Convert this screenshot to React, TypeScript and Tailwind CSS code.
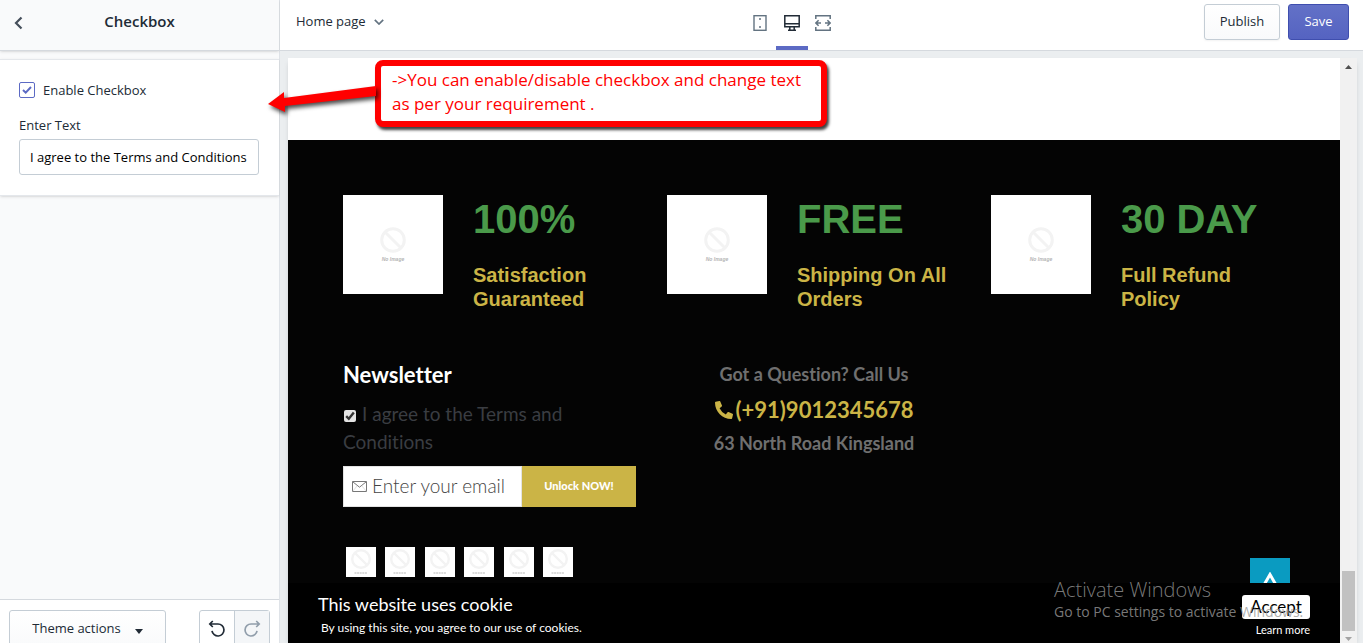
import { useState } from 'react';
import { FaPhoneAlt } from 'react-icons/fa';

const features = [
	{ title: '100%', text: 'Satisfaction Guaranteed' },
	{ title: 'FREE', text: 'Shipping On All Orders' },
	{ title: '30 DAY', text: 'Full Refund Policy' }
];

const socials = ['Facebook', 'Twitter', 'Pinterest', 'Instagram', 'YouTube', 'Vimeo'];

function NoImage() {
	return (
		<div className="w-[100px] h-[99px] shrink-0 bg-white flex flex-col items-center pt-8">
			<svg width="26" height="26" viewBox="0 0 26 26" fill="none" stroke="#f3f3f3" strokeWidth="3">
				<circle cx="13" cy="13" r="11.3" />
				<path d="M5 5l16 16" />
			</svg>
			<span className="mt-[3px] text-[5px] leading-[6px] italic font-bold text-[#b5b5b5]">No Image</span>
		</div>
	);
}

function SocialLink({ label }: { label: string }) {
	return (
		<a href="#" aria-label={label} className="w-[30px] h-[30px] bg-white flex justify-center">
			<svg width="30" height="30" viewBox="0 0 30 30" fill="none" stroke="#f3f3f3" strokeWidth="2.4">
				<circle cx="15" cy="12" r="8.8" />
				<path d="M9 6l12 12" />
				<path d="M8.5 26h13" stroke="#cfcfcf" strokeWidth="1.6" strokeDasharray="2 .6" />
			</svg>
		</a>
	);
}

function Sidebar() {
	const [enabled, setEnabled] = useState(true);
	const [text, setText] = useState('I agree to the Terms and Conditions');

	return (
		<aside className="w-[280px] shrink-0 flex flex-col border-r border-[#dfe3e8] bg-[#f9fafb]">
			<header className="h-[51px] shrink-0 flex items-center border-b border-[#d5d9de] shadow-sm pb-1">
				<button aria-label="Back" className="w-9 flex justify-center">
					<svg width="9" height="14" viewBox="0 0 9 14" fill="none" stroke="#454f5b" strokeWidth="2.2">
						<path d="M7.5 1.5L2 7l5.5 5.5" />
					</svg>
				</button>
				<h1 className="flex-1 pr-9 pb-1 text-center text-[15px] leading-5 font-semibold">Checkbox</h1>
			</header>

			<section className="mt-2 bg-white border-y border-[#e4e7eb] shadow-sm pl-[19px] pr-5 py-5">
				<label className="flex items-center gap-2 text-[13px] leading-5">
					<input
						type="checkbox"
						checked={enabled}
						onChange={(e) => setEnabled(e.target.checked)}
						className="peer sr-only"
					/>
					<span className="w-4 h-4 rounded-xs border border-[#5c6ac4] bg-white flex items-center justify-center">
						{enabled && (
							<svg width="10" height="8" viewBox="0 0 10 8" fill="none" stroke="#5c6ac4" strokeWidth="2">
								<path d="M1 4l2.7 2.6L9 1" />
							</svg>
						)}
					</span>
					Enable Checkbox
				</label>
				<label htmlFor="agree-text" className="block mt-[15px] text-[13px] leading-5">
					Enter Text
				</label>
				<input
					id="agree-text"
					value={text}
					onChange={(e) => setText(e.target.value)}
					className="mt-1 w-full h-9 px-[10px] text-[13px] text-black bg-white border border-[#c4cdd5] rounded-[3px]"
				/>
			</section>

			<footer className="mt-auto h-11 shrink-0 bg-white border-t border-[#d5d9de] px-[9px] pt-[10px] flex justify-between items-start overflow-hidden">
				<button className="w-[157px] h-[38px] shrink-0 flex items-center justify-center gap-[14px] border border-[#c4cdd5] rounded-[3px] bg-linear-to-b from-white to-[#f9fafb] text-[13px]">
					Theme actions
					<svg width="8" height="5" viewBox="0 0 8 5" className="mt-1">
						<path d="M0 0h8L4 5z" fill="#212b36" />
					</svg>
				</button>
				<div className="flex h-[38px] border border-[#c4cdd5] rounded-[3px]">
					<button aria-label="Undo" className="w-[34px] flex items-center justify-center">
						<svg width="18" height="18" viewBox="0 0 18 18" fill="none" stroke="#212b36" strokeWidth="1.7">
							<path d="M2 4h8a6 6 0 1 1-6 6.8M4.8 1L1.8 4l3 3" />
						</svg>
					</button>
					<button
						aria-label="Redo"
						disabled
						className="w-[35px] flex items-center justify-center border-l border-[#c4cdd5] bg-[#f4f6f8]"
					>
						<svg width="18" height="18" viewBox="0 0 18 18" fill="none" stroke="#919eab" strokeWidth="1.7">
							<path d="M16 4H8a6 6 0 1 0 6 6.8M13.2 1l3 3-3 3" />
						</svg>
					</button>
				</div>
			</footer>
		</aside>
	);
}

function TopBar() {
	return (
		<header className="h-[51px] shrink-0 flex justify-between bg-white border-b border-[#d5d9de] pl-4 pr-[14px]">
			<button className="h-11 flex items-center gap-2 text-[13px]">
				Home page
				<svg width="10" height="6" viewBox="0 0 10 6" fill="none" stroke="#637381" strokeWidth="1.7">
					<path d="M.8 .8L5 5 9.2 .8" />
				</svg>
			</button>

			<nav className="flex h-[50px] mr-1">
				<button aria-label="Mobile" className="w-[31px] flex justify-center pt-[15px]">
					<svg width="14" height="16" viewBox="0 0 14 16" fill="none" stroke="#637381" strokeWidth="1.4">
						<rect x="1" y=".7" width="12" height="14.6" />
						<path d="M6 4h2M6 12h2" />
					</svg>
				</button>
				<button aria-label="Desktop" className="w-8 flex justify-center pt-[15px] border-b-4 border-[#5c6ac4]">
					<svg width="16" height="16" viewBox="0 0 16 16" fill="none" stroke="#212b36" strokeWidth="1.5">
						<path d="M.8 .8h14.4v11H.8zM.8 8.8h14.4M5.8 12v3.2h4.4V12M4 15.2h8" />
					</svg>
				</button>
				<button aria-label="Full width" className="w-[31px] flex justify-center pt-[15px]">
					<svg width="16" height="16" viewBox="0 0 16 16" fill="none" stroke="#637381" strokeWidth="1.5">
						<path d="M.8 4V.8h14.4V4M.8 12v3.2h14.4V12M1 8h5M10 8h5M3.6 5.2L.9 8l2.7 2.8M12.4 5.2L15.1 8l-2.7 2.8" />
					</svg>
				</button>
			</nav>

			<div className="flex gap-2 pt-1 text-[13px]">
				<button className="w-[76px] h-9 border border-[#c4cdd5] rounded-[3px] bg-linear-to-b from-white to-[#f9fafb] shadow-xs">
					Publish
				</button>
				<button className="w-[61px] h-9 border border-[#3f4eae] rounded-[3px] bg-linear-to-b from-[#6371c7] to-[#5563c1] text-white">
					Save
				</button>
			</div>
		</header>
	);
}

function Newsletter() {
	const [agreed, setAgreed] = useState(true);

	return (
		<div className="pl-[15px] pr-4">
			<h3 className="text-[22px] leading-7 font-bold text-white">Newsletter</h3>
			<label className="block mt-[11px] pr-8 text-[19px] leading-7 text-[#3a3d42]">
				<input
					type="checkbox"
					checked={agreed}
					onChange={(e) => setAgreed(e.target.checked)}
					className="peer sr-only"
				/>
				<span className="inline-flex items-center justify-center align-baseline w-3 h-3 ml-px mr-[6px] rounded-xs bg-[#e4e4e4]">
					<svg width="10" height="10" viewBox="0 0 10 10" fill="none" stroke="#333" strokeWidth="2.4">
						{agreed && <path d="M1.2 5.2l2.6 2.6L8.8 1.6" />}
					</svg>
				</span>
				I agree to the Terms and Conditions
			</label>
			<form className="mt-[10px] flex h-[41px]" onSubmit={(e) => e.preventDefault()}>
				<div className="flex-1 min-w-0 flex items-center gap-[5px] pl-2 bg-white border border-[#e3e3e3]">
					<svg width="15" height="11" viewBox="0 0 15 11" fill="none" stroke="#777" className="shrink-0">
						<path d="M.5 .5h14v10H.5zM.8 .8l6.7 5.4L14.2 .8" />
						<path d="M.8 10.2l4.4-5.4M14.2 10.2L9.8 4.8" stroke="#ccc" strokeWidth=".6" />
					</svg>
					<input
						type="email"
						aria-label="Email"
						placeholder="Enter your email"
						className="w-full min-w-0 text-[19px] font-light outline-none placeholder:text-[#444]"
					/>
				</div>
				<button className="w-[114px] bg-[#cbb446] text-white text-[11px] font-black">Unlock NOW!</button>
			</form>
			<div className="mt-10 ml-[3px] w-[227px] flex justify-between">
				{socials.map((name) => (
					<SocialLink key={name} label={name} />
				))}
			</div>
		</div>
	);
}

function StoreFooter() {
	return (
		<div className="flex-1 bg-[#040404] px-10 pt-[55px] font-['Lato',sans-serif] [font-variant-ligatures:none]">
			<div className="grid grid-cols-3 font-['Liberation_Sans',sans-serif] font-bold">
				{features.map((f) => (
					<div key={f.title} className="flex gap-[30px] px-[15px]">
						<NoImage />
						<div>
							<h2 className="text-[40px] leading-12 text-[#4a9a4a] whitespace-nowrap">{f.title}</h2>
							<p className="mt-5 text-[20px] leading-6 text-[#cbb446]">{f.text}</p>
						</div>
					</div>
				))}
			</div>
			<div className="mt-[50px] grid grid-cols-3">
				<Newsletter />
				<div className="text-center font-bold text-[#6f6f6f] text-[18px]">
					<p className="leading-[26px]">Got a Question? Call Us</p>
					<a href="tel:+919012345678" className="mt-[9px] flex items-center justify-center gap-[3px] text-[22px] leading-7 text-[#cbb446]">
						<FaPhoneAlt size={18} />
						(+91)9012345678
					</a>
					<p className="mt-[5px] leading-7">63 North Road Kingsland</p>
				</div>
			</div>
		</div>
	);
}

function CookieBar() {
	return (
		<div className="absolute inset-x-0 bottom-0 h-[60px] px-[30px] bg-black text-white flex justify-between font-['Lato',sans-serif]">
			<div className="pt-[9px]">
				<p className="text-[18px] leading-6">This website uses cookie</p>
				<p className="pl-[3px] text-[12px] leading-6">By using this site, you agree to our use of cookies.</p>
			</div>
			<div className="pt-3 flex flex-col items-end">
				<button className="w-[68px] h-6 rounded-[3px] bg-white text-black text-[17px] leading-6">Accept</button>
				<a href="#" className="text-[11px] leading-[22px]">Learn more</a>
			</div>
		</div>
	);
}

function Callout() {
	return (
		<div className="absolute left-[268px] top-[60px] flex">
			<svg width="108" height="68" viewBox="0 0 108 68" className="drop-shadow-[2px_3px_2px_rgba(0,0,0,0.7)]">
				<path d="M0 44L16 32V38L108 26V36L17 46V52z" fill="#f00" />
			</svg>
			<p className="w-[452px] h-[67px] -ml-px border-[6px] border-[#f00] rounded-lg bg-white pl-[11px] pt-[2px] text-[17px] leading-6 text-[#f00] shadow-[2px_3px_3px_rgba(0,0,0,0.75)]">
				-&gt;You can enable/disable checkbox and change text
				<br />
				as per your requirement .
			</p>
		</div>
	);
}

export default function App() {
	return (
		<div className="relative h-screen flex overflow-hidden font-['Open_Sans',sans-serif] text-[#212b36]">
			<Sidebar />
			<main className="flex-1 min-w-0 flex flex-col bg-[#ebeef0]">
				<TopBar />
				<div className="flex-1 min-h-0 mt-[7px] ml-2 mr-[6px] flex shadow-md">
					<div className="relative flex-1 min-w-0 flex flex-col overflow-hidden bg-white">
						<div className="h-[82px] shrink-0" />
						<StoreFooter />
						<button
							aria-label="Back to top"
							className="absolute right-[50px] bottom-[45px] w-10 h-10 bg-[#0a9bc1] flex justify-center pt-[14px]"
						>
							<svg width="16" height="12" viewBox="0 0 16 12" fill="none" stroke="#fff" strokeWidth="3">
								<path d="M2 13L8 2.5 14 13" />
							</svg>
						</button>
						<CookieBar />
						<div className="absolute left-[766px] bottom-[21px] whitespace-nowrap text-[#999]/80 pointer-events-none">
							<p className="text-[20px] leading-6 font-light">Activate Windows</p>
							<p className="text-[14px] leading-5">Go to PC settings to activate Windows.</p>
						</div>
					</div>
					<div className="w-[17px] shrink-0 bg-[#f1f1f1] flex flex-col items-center pt-[7px] pb-[2px]">
						<svg width="7" height="4" viewBox="0 0 7 4">
							<path d="M3.5 0L7 4H0z" fill="#505050" />
						</svg>
						<div className="mt-auto mb-[6px] w-[13px] h-[60px] bg-[#c1c1c1]" />
						<svg width="7" height="4" viewBox="0 0 7 4">
							<path d="M0 0h7L3.5 4z" fill="#a3a3a3" />
						</svg>
					</div>
				</div>
			</main>
			<Callout />
		</div>
	);
}
